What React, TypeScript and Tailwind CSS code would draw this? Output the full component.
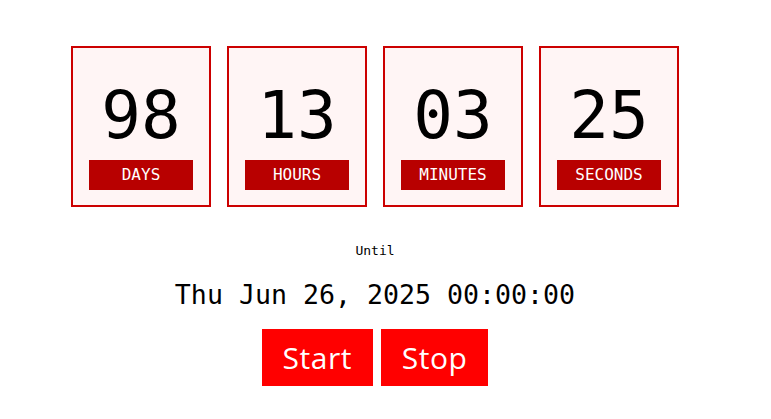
import React from "react";

const units = [
  { value: "98", label: "DAYS" },
  { value: "13", label: "HOURS" },
  { value: "03", label: "MINUTES" },
  { value: "25", label: "SECONDS" },
];

export default function App() {
  return (
    <div className="w-[750px] min-h-[419px] bg-white flex flex-col items-center pt-[46px] font-['DejaVu_Sans_Mono',monospace] text-black">
      <div className="flex gap-[16px]">
        {units.map((u) => (
          <div
            key={u.label}
            className="w-[140px] h-[161px] border-2 border-[#cc0000] bg-[#fff5f5] flex flex-col items-center pt-[32px]"
          >
            <div className="text-[66px] leading-[72px] tracking-normal">{u.value}</div>
            <div className="mt-[8px] w-[104px] h-[30px] bg-[#b80000] text-white text-[16px] flex items-center justify-center">
              {u.label}
            </div>
          </div>
        ))}
      </div>
      <div className="mt-[36px] text-[13px] leading-[16px]">Until</div>
      <div className="mt-[20px] text-[26.6px] leading-[32px]">Thu Jun 26, 2025 00:00:00</div>
      <div className="mt-[18px] flex gap-[8px] font-['Open_Sans',sans-serif]">
        <button className="h-[57px] px-[21px] bg-[#ff0000] text-white text-[30px] tracking-[0.5px] flex items-center justify-center">
          Start
        </button>
        <button className="h-[57px] px-[21px] bg-[#ff0000] text-white text-[30px] tracking-[0.5px] flex items-center justify-center">
          Stop
        </button>
      </div>
    </div>
  );
}
